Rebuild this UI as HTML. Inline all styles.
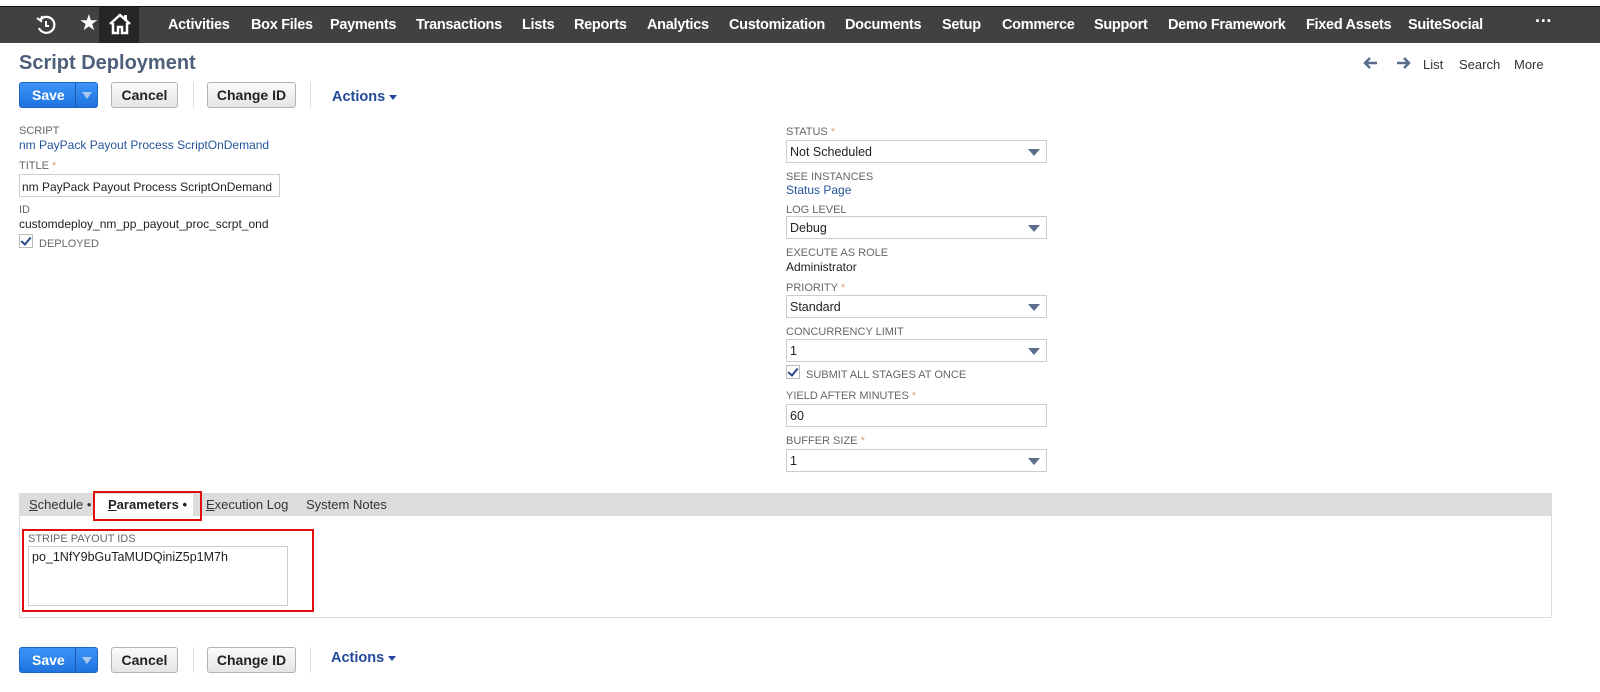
<!DOCTYPE html>
<html><head><meta charset="utf-8"><style>
*{margin:0;padding:0;box-sizing:border-box}
body{width:1600px;height:692px;background:#fff;font-family:"Liberation Sans",Arial,sans-serif;position:relative;overflow:hidden;color:#222}
.a{position:absolute}
#nav{left:0;top:6px;width:1600px;height:37px;background:#414141;border-top:1px solid #111}
.n{position:absolute;top:10px;color:#fff;font-weight:bold;font-size:14.5px;letter-spacing:-0.3px;white-space:nowrap}
.lbl{position:absolute;font-size:11px;color:#666;text-transform:uppercase;white-space:nowrap}
.req{color:#e2a070;font-size:11px}
.val{position:absolute;font-size:12px;color:#222}
.lnk{position:absolute;font-size:12px;color:#255599;white-space:nowrap}
.sel{position:absolute;left:786px;width:261px;height:23px;border:1px solid #ccc;font-size:12.5px;padding:4px 0 0 3px;color:#222}
.sel:after{content:"";position:absolute;right:6px;top:8px;border-left:6px solid transparent;border-right:6px solid transparent;border-top:7px solid #5a6e8c}
.btn{position:absolute;height:26px;border:1px solid #b3b3b3;border-radius:3px;background:linear-gradient(#fafafa,#e5e5e5);font-size:14px;font-weight:bold;text-align:center;padding-top:4px;color:#222;white-space:nowrap}
.save{position:absolute;height:26px;width:79px;border-radius:3px;background:linear-gradient(#3d94f6,#1e73e0);border:1px solid #1a64c4;color:#fff;font-weight:bold;font-size:14px}
.save span{position:absolute;left:12px;top:4px}
.save i{position:absolute;left:55px;top:0;width:1px;height:24px;background:#1a5ab0}
.save b{position:absolute;left:62px;top:9px;border-left:5px solid transparent;border-right:5px solid transparent;border-top:7px solid #a8c8f0}
.sep{position:absolute;width:1px;height:26px;background:#ddd}
.act{position:absolute;color:#24489a;font-size:14.5px;font-weight:bold}
.act:after{content:"";display:inline-block;margin-left:4px;vertical-align:middle;border-left:4px solid transparent;border-right:4px solid transparent;border-top:5px solid #24489a}
.chk{position:absolute;width:14px;height:14px;border:1px solid #bbb;background:#fff}
.chk:after{content:"";position:absolute;left:3px;top:0px;width:4px;height:8px;border:solid #2a4a8a;border-width:0 2.5px 2.5px 0;transform:rotate(40deg)}
</style></head><body>
<div id="nav" class="a">
 <div class="a" style="left:99px;top:0;width:40px;height:36px;background:#262626"></div>
 <svg class="a" style="left:35px;top:7px" width="22" height="22" viewBox="0 0 22 22"><path d="M5 6 A8 8 0 1 1 4 14" stroke="#fff" stroke-width="2.2" fill="none"/><path d="M2 4 L6 7 L7 2" stroke="#fff" stroke-width="2" fill="none"/><path d="M11 7 V12 H14" stroke="#fff" stroke-width="2" fill="none"/></svg>
 <div class="a" style="left:79px;top:3px;color:#fff;font-size:22px">★</div>
 <svg class="a" style="left:108px;top:5px" width="24" height="24" viewBox="0 0 24 24"><path d="M2 12 L12 3 L22 12" stroke="#fff" stroke-width="2.5" fill="none"/><path d="M5 11 V21 H10 V15 H14 V21 H19 V11" stroke="#fff" stroke-width="2.5" fill="none"/><rect x="16" y="3" width="3" height="5" fill="#fff"/></svg>
 <span class="n" style="left:168px">Activities</span>
 <span class="n" style="left:251px">Box Files</span>
 <span class="n" style="left:330px">Payments</span>
 <span class="n" style="left:416px">Transactions</span>
 <span class="n" style="left:522px">Lists</span>
 <span class="n" style="left:574px">Reports</span>
 <span class="n" style="left:647px">Analytics</span>
 <span class="n" style="left:729px">Customization</span>
 <span class="n" style="left:845px">Documents</span>
 <span class="n" style="left:942px">Setup</span>
 <span class="n" style="left:1002px">Commerce</span>
 <span class="n" style="left:1094px">Support</span>
 <span class="n" style="left:1168px">Demo Framework</span>
 <span class="n" style="left:1306px">Fixed Assets</span>
 <span class="n" style="left:1408px">SuiteSocial</span>
 <span class="n" style="left:1535px;top:4px;font-size:18px">···</span>
</div>
<div class="a" style="left:19px;top:52px;font-size:20px;font-weight:bold;color:#4d5f79">Script Deployment</div>
<svg class="a" style="left:1363px;top:56px" width="50" height="14"><path d="M2 7 H14 M7 2 L2 7 L7 12" stroke="#5a6e8c" stroke-width="2.5" fill="none"/><path d="M34 7 H46 M41 2 L46 7 L41 12" stroke="#5a6e8c" stroke-width="2.5" fill="none"/></svg>
<div class="a" style="left:1423px;top:57px;font-size:13px;color:#333">List</div>
<div class="a" style="left:1459px;top:57px;font-size:13px;color:#333">Search</div>
<div class="a" style="left:1514px;top:57px;font-size:13px;color:#333">More</div>

<div class="save" style="left:19px;top:82px"><span>Save</span><i></i><b></b></div>
<div class="btn" style="left:111px;top:82px;width:67px">Cancel</div>
<div class="sep" style="left:193px;top:82px"></div>
<div class="btn" style="left:207px;top:82px;width:89px">Change ID</div>
<div class="sep" style="left:310px;top:82px"></div>
<div class="act" style="left:332px;top:89px">Actions</div>

<div class="lbl" style="left:19px;top:125px">Script</div>
<div class="lnk" style="left:19px;top:138px">nm PayPack Payout Process ScriptOnDemand</div>
<div class="lbl" style="left:19px;top:160px">Title <span class="req">*</span></div>
<div class="a" style="left:19px;top:174px;width:261px;height:23px;border:1px solid #ccc;font-size:12px;padding:5px 0 0 2px;white-space:nowrap;overflow:hidden">nm PayPack Payout Process ScriptOnDemand</div>
<div class="lbl" style="left:19px;top:204px">ID</div>
<div class="val" style="left:19px;top:217px">customdeploy_nm_pp_payout_proc_scrpt_ond</div>
<div class="chk" style="left:19px;top:234px"></div>
<div class="lbl" style="left:39px;top:238px">Deployed</div>

<div class="lbl" style="left:786px;top:126px">Status <span class="req">*</span></div>
<div class="sel" style="top:140px">Not Scheduled</div>
<div class="lbl" style="left:786px;top:171px">See Instances</div>
<div class="lnk" style="left:786px;top:183px">Status Page</div>
<div class="lbl" style="left:786px;top:204px">Log Level</div>
<div class="sel" style="top:216px">Debug</div>
<div class="lbl" style="left:786px;top:247px">Execute As Role</div>
<div class="val" style="left:786px;top:260px">Administrator</div>
<div class="lbl" style="left:786px;top:282px">Priority <span class="req">*</span></div>
<div class="sel" style="top:295px">Standard</div>
<div class="lbl" style="left:786px;top:326px">Concurrency Limit</div>
<div class="sel" style="top:339px">1</div>
<div class="chk" style="left:786px;top:365px"></div>
<div class="lbl" style="left:806px;top:369px">Submit All Stages At Once</div>
<div class="lbl" style="left:786px;top:390px">Yield After Minutes <span class="req">*</span></div>
<div class="a" style="left:786px;top:404px;width:261px;height:23px;border:1px solid #ccc;font-size:12.5px;padding:4px 0 0 3px">60</div>
<div class="lbl" style="left:786px;top:435px">Buffer Size <span class="req">*</span></div>
<div class="sel" style="top:449px">1</div>

<div class="a" style="left:19px;top:493px;width:1533px;height:125px;border:1px solid #ddd"></div>
<div class="a" style="left:20px;top:494px;width:1531px;height:22px;background:#dcdcdc"></div>
<div class="a" style="left:29px;top:497px;font-size:13px;color:#333"><u>S</u>chedule •</div>
<div class="a" style="left:95px;top:494px;width:98px;height:22px;background:#fff"></div>
<div class="a" style="left:108px;top:497px;font-size:13px;font-weight:bold;color:#222"><u>P</u>arameters •</div>
<div class="a" style="left:206px;top:497px;font-size:13px;color:#333"><u>E</u>xecution Log</div>
<div class="a" style="left:306px;top:497px;font-size:13px;color:#333">System Notes</div>
<div class="a" style="left:93px;top:491px;width:109px;height:30px;border:2px solid #e01010"></div>
<div class="a" style="left:22px;top:529px;width:292px;height:83px;border:2px solid #e01010"></div>
<div class="lbl" style="left:28px;top:533px">Stripe Payout IDs</div>
<div class="a" style="left:28px;top:546px;width:260px;height:60px;border:1px solid #ccc;font-size:12.5px;padding:3px 0 0 3px">po_1NfY9bGuTaMUDQiniZ5p1M7h</div>

<div class="save" style="left:19px;top:647px"><span>Save</span><i></i><b></b></div>
<div class="btn" style="left:111px;top:647px;width:67px">Cancel</div>
<div class="sep" style="left:193px;top:647px"></div>
<div class="btn" style="left:207px;top:647px;width:89px">Change ID</div>
<div class="sep" style="left:310px;top:647px"></div>
<div class="act" style="left:331px;top:650px">Actions</div>
</body></html>
